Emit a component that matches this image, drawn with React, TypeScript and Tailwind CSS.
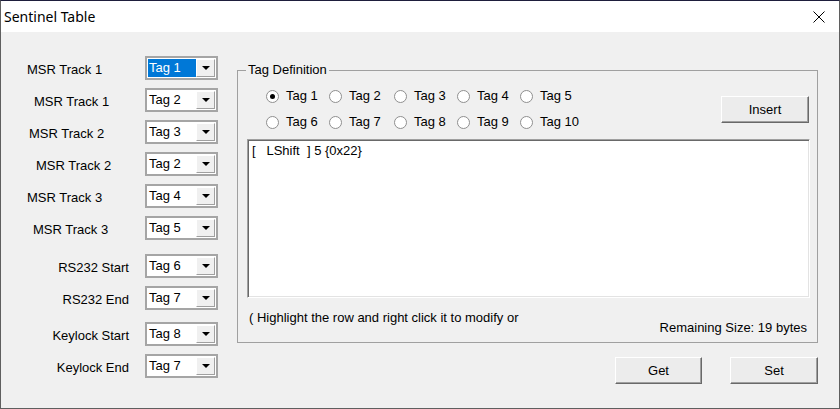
import React from "react";

function Combo({ value, selected = false }: { value: string; selected?: boolean }) {
  return (
    <div className="flex h-[24px] w-[73px] border-2 border-[#a5a5a5] bg-white p-[1px]">
      <div
        className={
          "flex-1 pl-[1px] text-[13px] leading-[18px] " +
          (selected ? "bg-[#0078d7] text-white" : "text-black")
        }
      >
        {value}
      </div>
      <div className="flex h-[18px] w-[19px] items-center justify-center border border-t-white border-l-white border-b-[#a0a0a0] border-r-[#a0a0a0] bg-[#f0f0f0]">
        <svg width="8" height="4" viewBox="0 0 8 4">
          <polygon points="0,0 8,0 4,4" fill="#000" />
        </svg>
      </div>
    </div>
  );
}

function Radio({ label, checked = false }: { label: string; checked?: boolean }) {
  return (
    <div className="flex h-[14px] items-center">
      <span className="flex h-[13px] w-[13px] items-center justify-center rounded-full border border-[#8f8f8f] bg-white">
        {checked && <span className="h-[5px] w-[5px] rounded-full bg-black" />}
      </span>
      <span className="ml-[7px] text-[13px] leading-[14px] text-black">{label}</span>
    </div>
  );
}

function WinButton({ label, w }: { label: string; w: string }) {
  return (
    <div
      className={
        "flex h-[27px] items-center justify-center border border-t-white border-l-white border-b-[#696969] border-r-[#696969] bg-[#ececec] text-[13px] text-black shadow-[inset_-1px_-1px_0_#a0a0a0] " +
        w
      }
    >
      {label}
    </div>
  );
}

type Row = { label: string; tag: string; pl?: string; right?: boolean; mt: string; selected?: boolean };

const rows: Row[] = [
  { label: "MSR Track 1", tag: "Tag 1", pl: "pl-[26px]", mt: "mt-0", selected: true },
  { label: "MSR Track 1", tag: "Tag 2", pl: "pl-[33px]", mt: "mt-[8px]" },
  { label: "MSR Track 2", tag: "Tag 3", pl: "pl-[28px]", mt: "mt-[8px]" },
  { label: "MSR Track 2", tag: "Tag 2", pl: "pl-[35px]", mt: "mt-[8px]" },
  { label: "MSR Track 3", tag: "Tag 4", pl: "pl-[26px]", mt: "mt-[8px]" },
  { label: "MSR Track 3", tag: "Tag 5", pl: "pl-[32px]", mt: "mt-[8px]" },
  { label: "RS232 Start", tag: "Tag 6", right: true, mt: "mt-[14px]" },
  { label: "RS232 End", tag: "Tag 7", right: true, mt: "mt-[8px]" },
  { label: "Keylock Start", tag: "Tag 8", right: true, mt: "mt-[12px]" },
  { label: "Keylock End", tag: "Tag 7", right: true, mt: "mt-[8px]" },
];

export default function App() {
  return (
    <div className="flex h-[409px] w-[840px] flex-col overflow-hidden border border-[#5f5f5f] border-t-[#1e1e3c] bg-[#f0f0f0] font-['Liberation_Sans',Arial,sans-serif]">
      {/* Title bar */}
      <div className="flex h-[31px] shrink-0 items-center justify-between bg-white pl-[3px] pr-[14px]">
        <span className="font-['Noto_Sans',sans-serif] text-[14px] text-black">Sentinel Table</span>
        <svg width="12" height="12" viewBox="0 0 12 12">
          <path d="M0.5 0.5 L11.5 11.5 M11.5 0.5 L0.5 11.5" stroke="#000" strokeWidth="1" />
        </svg>
      </div>

      {/* Body */}
      <div className="flex flex-1">
        {/* Left column */}
        <div className="flex w-[236px] flex-col pt-[24px]">
          {rows.map((r, i) => (
            <div key={i} className={"flex items-start " + r.mt}>
              <div
                className={
                  "mt-[6px] w-[144px] text-[13px] leading-[15px] text-black " +
                  (r.right ? "pr-[16px] text-right" : r.pl)
                }
              >
                {r.label}
              </div>
              <Combo value={r.tag} selected={r.selected} />
            </div>
          ))}
        </div>

        {/* Right column */}
        <div className="flex w-[581px] flex-col">
          <fieldset className="m-0 mt-[31px] border border-[#a0a0a0] p-0">
            <legend className="ml-[8px] px-[2px] text-[13px] leading-[14px] text-black">Tag Definition</legend>
            <div className="flex flex-col pl-[9px] pr-[7px] pb-[7px]">
              <div className="mt-[12px] flex items-start justify-between">
                <div className="ml-[19px] grid grid-cols-[63px_65px_63px_63px_auto] gap-y-[12px]">
                  <Radio label="Tag 1" checked />
                  <Radio label="Tag 2" />
                  <Radio label="Tag 3" />
                  <Radio label="Tag 4" />
                  <Radio label="Tag 5" />
                  <Radio label="Tag 6" />
                  <Radio label="Tag 7" />
                  <Radio label="Tag 8" />
                  <Radio label="Tag 9" />
                  <Radio label="Tag 10" />
                </div>
                <div className="mr-[1px] mt-[7px]">
                  <WinButton label="Insert" w="w-[88px]" />
                </div>
              </div>
              <div className="mt-[10px] h-[159px] w-full border border-t-[#a0a0a0] border-l-[#a0a0a0] border-b-white border-r-white bg-white shadow-[inset_1px_1px_0_#696969,inset_-1px_-1px_0_#e3e3e3]">
                <div className="whitespace-pre pl-[4px] pt-[3px] text-[13px] leading-[15px] text-black">
                  {"[   LShift  ] 5 {0x22}"}
                </div>
              </div>
              <div className="mt-[12px] flex items-start justify-between">
                <span className="pl-[2px] text-[13px] leading-[15px] text-black">
                  ( Highlight the row and right click it to modify or
                </span>
                <span className="mr-[3px] mt-[10px] text-[13px] leading-[15px] text-black">
                  Remaining Size: 19 bytes
                </span>
              </div>
            </div>
          </fieldset>
          <div className="mt-[14px] flex justify-end gap-[28px]">
            <WinButton label="Get" w="w-[87px]" />
            <WinButton label="Set" w="w-[88px]" />
          </div>
        </div>
      </div>
    </div>
  );
}
